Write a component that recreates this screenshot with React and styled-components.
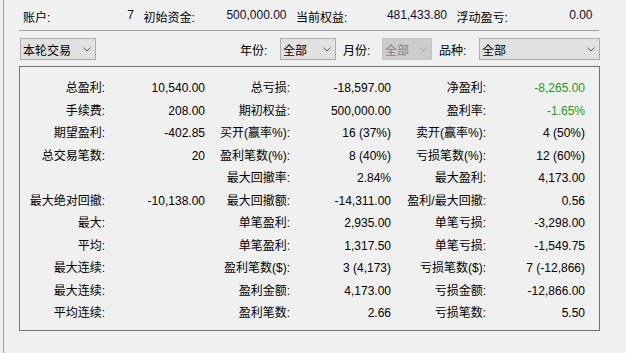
import React from "react";
import styled, { createGlobalStyle } from "styled-components";

const Global = createGlobalStyle`
  html, body { margin: 0; padding: 0; background: #f0f0f0; }
  body {
    font-family: "Liberation Sans", "Noto Sans CJK SC", sans-serif;
    font-size: 12px;
    color: #000;
  }
`;

const Window = styled.div`
  width: 626px;
  height: 353px;
  box-sizing: border-box;
  padding-left: 3px;
  background: #f0f0f0;
  overflow: hidden;
`;

const Frame = styled.div`
  height: 100%;
  box-sizing: border-box;
  border-left: 1px solid #a0a0a0;
  padding-left: 15px;
  width: 597px;
  display: flex;
  flex-direction: column;
`;

const SummaryBar = styled.div`
  height: 27px;
  padding-top: 3px;
  display: flex;
  align-items: center;
  padding-left: 4px;
  gap: 9.5px;
`;

const SummaryCell = styled.div`
  width: ${(p) => p.$w}px;
  display: flex;
  justify-content: space-between;
  white-space: nowrap;
`;

const SummaryValue = styled.span`
  color: #0b1030;
`;

const Rule = styled.div`
  height: 1px;
  width: 580px;
  background: #a0a0a0;
`;

const Toolbar = styled.div`
  margin-top: 7px;
  height: 22px;
  display: flex;
  align-items: center;
  width: 581px;
`;

const Spacer = styled.div`
  flex: 1;
`;

const FieldLabel = styled.span`
  width: ${(p) => p.$w}px;
  white-space: nowrap;
`;

const Select = styled.div`
  box-sizing: border-box;
  width: ${(p) => p.$w}px;
  height: 22px;
  margin-left: ${(p) => p.$ml || 0}px;
  margin-right: ${(p) => p.$mr || 0}px;
  border: 1px solid ${(p) => (p.$disabled ? "#c4c4c4" : "#adadad")};
  background: ${(p) => (p.$disabled ? "#cccccc" : "#e1e1e1")};
  color: ${(p) => (p.$disabled ? "#838383" : "#000")};
  display: flex;
  align-items: center;
  justify-content: space-between;
  padding: 0 4px 0 2px;
  white-space: nowrap;
`;

const Chevron = styled.svg`
  width: 8px;
  height: 5px;
  flex: none;
`;

const Panel = styled.div`
  margin-top: 6px;
  width: 581px;
  height: 265px;
  box-sizing: border-box;
  border: 1px solid #747474;
  padding-top: 10px;
  display: grid;
  grid-template-columns: 85px 100px 85px 101px 95px 99px;
  grid-auto-rows: 22.5px;
  align-content: start;
`;

const Cell = styled.div`
  text-align: right;
  line-height: 22.5px;
  white-space: nowrap;
  color: ${(p) => (p.$green ? "#1f9a1f" : "#000")};
`;

function Arrow({ disabled }) {
  return (
    <Chevron viewBox="0 0 8 5">
      <polyline
        points="0.5,0.5 4,4 7.5,0.5"
        fill="none"
        stroke={disabled ? "#a8a8a8" : "#606060"}
        strokeWidth="1"
      />
    </Chevron>
  );
}

const summary = [
  { w: 111, label: "账户:", value: "7" },
  { w: 143, label: "初始资金:", value: "500,000.00" },
  { w: 151, label: "当前权益:", value: "481,433.80" },
  { w: 136, label: "浮动盈亏:", value: "0.00" },
];

const rows = [
  ["总盈利:", "10,540.00", "总亏损:", "-18,597.00", "净盈利:", "-8,265.00", true],
  ["手续费:", "208.00", "期初权益:", "500,000.00", "盈利率:", "-1.65%", true],
  ["期望盈利:", "-402.85", "买开(赢率%):", "16 (37%)", "卖开(赢率%):", "4 (50%)"],
  ["总交易笔数:", "20", "盈利笔数(%):", "8 (40%)", "亏损笔数(%):", "12 (60%)"],
  ["", "", "最大回撤率:", "2.84%", "最大盈利:", "4,173.00"],
  ["最大绝对回撤:", "-10,138.00", "最大回撤额:", "-14,311.00", "盈利/最大回撤:", "0.56"],
  ["最大:", "", "单笔盈利:", "2,935.00", "单笔亏损:", "-3,298.00"],
  ["平均:", "", "单笔盈利:", "1,317.50", "单笔亏损:", "-1,549.75"],
  ["最大连续:", "", "盈利笔数($):", "3 (4,173)", "亏损笔数($):", "7 (-12,866)"],
  ["最大连续:", "", "盈利金额:", "4,173.00", "亏损金额:", "-12,866.00"],
  ["平均连续:", "", "盈利笔数:", "2.66", "亏损笔数:", "5.50"],
];

export default function App() {
  return (
    <>
      <Global />
      <Window>
        <Frame>
          <SummaryBar>
            {summary.map((s) => (
              <SummaryCell key={s.label} $w={s.w}>
                <span>{s.label}</span>
                <SummaryValue>{s.value}</SummaryValue>
              </SummaryCell>
            ))}
          </SummaryBar>
          <Rule />
          <Toolbar>
            <Select $w={76} $ml={1}>
              <span>本轮交易</span>
              <Arrow />
            </Select>
            <Spacer />
            <FieldLabel $w={40}>年份:</FieldLabel>
            <Select $w={56} $mr={7}>
              <span>全部</span>
              <Arrow />
            </Select>
            <FieldLabel $w={39}>月份:</FieldLabel>
            <Select $w={50} $mr={7} $disabled>
              <span>全部</span>
              <Arrow disabled />
            </Select>
            <FieldLabel $w={40}>品种:</FieldLabel>
            <Select $w={121}>
              <span>全部</span>
              <Arrow />
            </Select>
          </Toolbar>
          <Panel>
            {rows.map((r, i) =>
              r.slice(0, 6).map((c, j) => (
                <Cell key={`${i}-${j}`} $green={r[6] && j === 5}>
                  {c}
                </Cell>
              ))
            )}
          </Panel>
        </Frame>
      </Window>
    </>
  );
}
